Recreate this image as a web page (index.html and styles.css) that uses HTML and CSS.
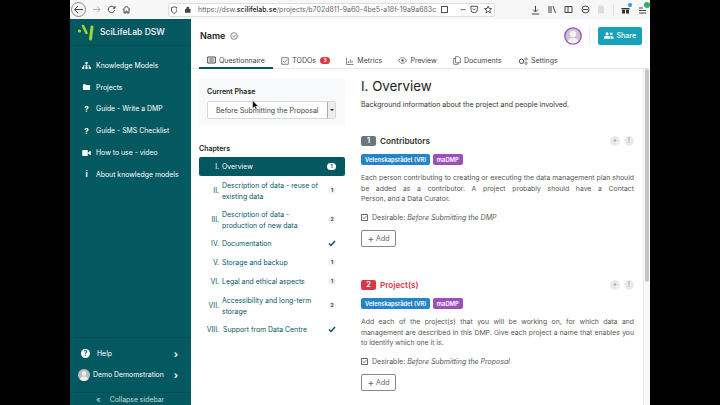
FILE: index.html
```html
<!DOCTYPE html>
<html lang="en">
<head>
    <meta charset="UTF-8">
    <title>Questionnaire - SciLifeLab DSW</title>
    <link rel="stylesheet" href="styles.css">
</head>
<body>
    <div class="screen">
        <!-- Browser toolbar -->
        <div class="browser">
            <span class="nav-back"><svg width="11" height="11" viewBox="0 0 11 11"><path d="M10 5.500H1.500M5 2 1.500 5.500 5 9" class="ico"/></svg></span>
            <svg class="faded" width="9" height="9" viewBox="0 0 9 9"><path d="M8 4.500H1M5 1.500l3 3-3 3" class="ico"/></svg>
            <svg width="9" height="9" viewBox="0 0 9 9"><path d="M7.600 5.200A3.200 3.200 0 1 1 6.600 2L8 3.200M8 1v2.200H5.800" class="ico"/></svg>
            <svg width="9" height="9" viewBox="0 0 9 9"><path d="M1 4.500 4.500 1 8 4.500M2 4v4h2V6h1v2h2V4" class="ico"/></svg>
            <div class="urlbar">
                <svg width="7" height="8" viewBox="0 0 7 8"><path d="M3.500.5 6.500 1.500V4C6.500 6 5 7 3.500 7.600 2 7 .5 6 .5 4V1.500z" class="ico"/></svg>
                <svg class="lock" width="6" height="7" viewBox="0 0 6 7"><path d="M1.500 3V2a1.500 1.500 0 0 1 3 0v1H6v4H0V3z" fill="#444"/></svg>
                <span class="url">https://dsw.<b>scilifelab.se</b>/projects/b702d811-9a60-4be5-a18f-19a9a683c</span>
                <span class="reader"></span>
                <span class="dots">•••</span>
                <svg class="pocket" width="9" height="9" viewBox="0 0 9 9"><path d="M1 1h7v3.500a3.500 3.500 0 0 1-7 0zM3 3.500l1.500 1.500L6 3.500" class="ico"/></svg>
                <svg class="star" width="9" height="9" viewBox="0 0 9 9"><path d="M4.500.8 5.600 3.300 8.300 3.600 6.300 5.400 6.900 8.100 4.500 6.700 2.100 8.100 2.700 5.400.7 3.600 3.400 3.300z" class="ico"/></svg>
            </div>
            <div class="tools">
                <svg width="9" height="10" viewBox="0 0 9 10"><path d="M4.500 1v5.500M2 4.500l2.500 2.500L7 4.500M.8 9h7.400" class="ico"/></svg>
                <svg width="9" height="9" viewBox="0 0 9 9"><path d="M1 1v7M3 1v7M5 1l2.500 7" class="ico"/></svg>
                <svg width="9" height="9" viewBox="0 0 9 9"><path d="M1 1.500h7v6H1zM4 1.500v6" class="ico"/></svg>
                <svg width="9" height="9" viewBox="0 0 9 9"><circle cx="4.500" cy="4.500" r="3.500" class="ico"/><path d="M2 4.500h5" class="ico"/></svg>
                <svg width="8" height="9" viewBox="0 0 8 9"><path d="M1 .5h4.500L7 2v6.500H1z" fill="#ddd"/></svg>
                <span class="tool-sep"></span>
                <span class="menu-btn">
                    <svg width="9" height="9" viewBox="0 0 9 9"><path d="M.5 3h8v1.500H.5zM1 5h3v3.500H1zM5 5h3v3.500H5z" fill="#333"/></svg>
                    <span class="gift-dot"></span>
                </span>
                <span class="menu-btn">
                    <svg width="9" height="9" viewBox="0 0 9 9"><path d="M1 3h4M1 5.500h7M1 8h7" class="ico"/></svg>
                    <span class="update-dot"></span>
                </span>
            </div>
        </div>

        <div class="app">
            <!-- Sidebar -->
            <aside class="sidebar">
                <div class="brand">
                    <svg width="16" height="17" viewBox="0 0 16 17">
                        <circle cx="1.500" cy="7" r="1.600" fill="#a7d130"/>
                        <path d="M5 2 8.500 9" stroke="#a7d130" stroke-width="2.600" stroke-linecap="round"/>
                        <path d="M14 3 12.500 15" stroke="#a7d130" stroke-width="3" stroke-linecap="round"/>
                    </svg>
                    <span>SciLifeLab DSW</span>
                </div>
                <ul class="menu">
                    <li><svg class="menu-icon" width="9" height="7" viewBox="0 0 10 8"><path d="M3.800 0h2.400v2.400H3.800zM0 5.600h2.400V8H0zM3.800 5.600h2.400V8H3.800zM7.600 5.600H10V8H7.600zM4.600 2.400h.8V4H8.800v1.600H8V4.800H5.400v.8h-.8v-.8H2v.8h-.8V4h3.400z" fill="#fff"/></svg>Knowledge Models</li>
                    <li><svg class="menu-icon" width="8" height="6" viewBox="0 0 9 7.500"><path d="M0 1a.8.8 0 0 1 .8-.8h2.400l1 1h4a.8.8 0 0 1 .8.8v4.700a.8.8 0 0 1-.8.8H.8A.8.8 0 0 1 0 6.700z" fill="#fff"/></svg>Projects</li>
                    <li><span class="menu-icon glyph">?</span>Guide - Write a DMP</li>
                    <li><span class="menu-icon glyph">?</span>Guide - SMS Checklist</li>
                    <li><svg class="menu-icon" width="9" height="6" viewBox="0 0 10 7"><path d="M0 1a1 1 0 0 1 1-1h4.500a1 1 0 0 1 1 1v5a1 1 0 0 1-1 1H1a1 1 0 0 1-1-1zM7 2.500 10 .8v5.400L7 4.500z" fill="#fff"/></svg>How to use - video</li>
                    <li><span class="menu-icon glyph">i</span>About knowledge models</li>
                </ul>
                <div class="side-bottom">
                    <div class="side-row">
                        <span class="help-dot">?</span><span class="side-label">Help</span><span class="chev">›</span>
                    </div>
                    <div class="side-row user-row">
                        <svg class="user-pic" width="12" height="12" viewBox="0 0 12 12"><circle cx="6" cy="6" r="6" fill="#bdbdbd"/><circle cx="6" cy="4.600" r="2.300" fill="#eee"/><path d="M2 10.500C2.500 8 4 7.500 6 7.500s3.500.5 4 3A6 6 0 0 1 2 10.500z" fill="#eee"/></svg>
                        <span class="side-label">Demo Demomstration</span><span class="chev">›</span>
                    </div>
                </div>
                <div class="collapse"><span class="collapse-chev">«</span>Collapse sidebar</div>
            </aside>

            <main class="main">
                <div class="topbar">
                    <span class="name">Name</span>
                    <svg class="saved" width="8" height="8" viewBox="0 0 8 8"><circle cx="4" cy="4" r="3.300" class="ico thin"/><path d="M2.500 4 3.600 5 5.500 3" class="ico thin"/></svg>
                    <svg class="avatar" width="18" height="18" viewBox="0 0 18 18"><circle cx="9" cy="9" r="8.200" fill="#c9c9c9" stroke="#a043c8" stroke-width="1.300"/><circle cx="9" cy="7" r="3.200" fill="#f2f2f2"/><path d="M3.800 14.500C4.500 11.500 6.500 11 9 11s4.500.5 5.200 3.500A7.500 7.500 0 0 1 3.800 14.500z" fill="#f2f2f2"/></svg>
                    <span class="top-sep"></span>
                    <button class="share"><svg width="10" height="7" viewBox="0 0 10 7"><circle cx="3.200" cy="1.700" r="1.600" fill="#fff"/><circle cx="7.500" cy="1.700" r="1.400" fill="#fff"/><path d="M0 7V5.500A2 2 0 0 1 2 3.800h2.400a2 2 0 0 1 2 1.700V7zM7 7V5.500C7 4.800 6.800 4.300 6.500 3.900H8a2 2 0 0 1 2 1.600V7z" fill="#fff"/></svg>Share</button>
                </div>

                <nav class="tabs">
                    <span class="tab active"><svg width="9" height="8" viewBox="0 0 9 8"><path d="M.7 1h7.600v6H.7zM2.300 3h4.400M2.300 5h4.400" class="ico"/></svg>Questionnaire</span>
                    <span class="tab"><svg width="8" height="8" viewBox="0 0 8 8"><path d="M.7.700h6.600v6.600H.7zM2 4l1.500 1.500L6 2.500" class="ico thin"/></svg>TODOs<span class="count">3</span></span>
                    <span class="tab"><svg width="8" height="8" viewBox="0 0 8 8"><path d="M.5.500v7h7M2.500 6V4M4.300 6V2.500M6 6V3.500" class="ico thin"/></svg>Metrics</span>
                    <span class="tab"><svg width="9" height="7" viewBox="0 0 9 7"><path d="M.5 3.500C2 1 3 .7 4.500.7S7 1 8.500 3.500C7 6 6 6.300 4.500 6.300S2 6 .5 3.500z" class="ico thin"/><circle cx="4.500" cy="3.500" r="1.200" fill="#555"/></svg>Preview</span>
                    <span class="tab"><svg width="8" height="9" viewBox="0 0 8 9"><path d="M2.500.7h3l2 2v4h-5zM2.500 2.500H.7v5.800h4.500V6.700" class="ico thin"/></svg>Documents</span>
                    <span class="tab"><svg width="10" height="8" viewBox="0 0 10 8"><circle cx="3.500" cy="4.300" r="2.200" class="ico"/><circle cx="8" cy="2" r="1.200" class="ico thin"/><circle cx="8" cy="6.200" r="1.200" class="ico thin"/></svg>Settings</span>
                </nav>

                <div class="body">
                    <!-- Left column -->
                    <section class="chapters-col">
                        <div class="phase">
                            <div class="phase-label">Current Phase</div>
                            <div class="phase-select">
                                <span class="phase-value">Before Submitting the Proposal</span>
                                <span class="phase-arrow"></span>
                            </div>
                        </div>
                        <div class="chapters-title">Chapters</div>
                        <ul class="chapters">
                            <li class="chapter current"><span class="num">I.</span><span class="ctitle">Overview</span><span class="pill">1</span></li>
                            <li class="chapter tall"><span class="num">II.</span><span class="ctitle">Description of data - reuse of existing data</span><span class="pill">1</span></li>
                            <li class="chapter tall"><span class="num">III.</span><span class="ctitle">Description of data - production of new data</span><span class="pill">2</span></li>
                            <li class="chapter"><span class="num">IV.</span><span class="ctitle">Documentation</span><svg class="done" width="8" height="7" viewBox="0 0 8 7"><path d="M1 3.500 3 5.500 7 1" stroke="#04585f" stroke-width="1.500" fill="none"/></svg></li>
                            <li class="chapter"><span class="num">V.</span><span class="ctitle">Storage and backup</span><span class="pill">1</span></li>
                            <li class="chapter"><span class="num">VI.</span><span class="ctitle">Legal and ethical aspects</span><span class="pill">1</span></li>
                            <li class="chapter tall"><span class="num">VII.</span><span class="ctitle">Accessibility and long-term storage</span><span class="pill">2</span></li>
                            <li class="chapter"><span class="num">VIII.</span><span class="ctitle wide">Support from Data Centre</span><svg class="done" width="8" height="7" viewBox="0 0 8 7"><path d="M1 3.500 3 5.500 7 1" stroke="#04585f" stroke-width="1.500" fill="none"/></svg></li>
                        </ul>
                    </section>

                    <!-- Question content -->
                    <section class="content">
                        <h1>I. Overview</h1>
                        <p class="lead">Background information about the project and people involved.</p>

                        <article class="question first">
                            <div class="q-head">
                                <span class="q-num grey">1</span>
                                <span class="q-title">Contributors</span>
                                <span class="q-action">+</span>
                                <span class="q-action">!</span>
                            </div>
                            <div class="tags"><span class="tag blue">Vetenskapsrådet (VR)</span><span class="tag purple">maDMP</span></div>
                            <p class="q-text">Each person contributing to creating or executing the data management plan should be added as a contributor. A project probably should have a Contact <span class="keep">Person, and a Data Curator.</span></p>
                            <div class="desirable"><svg width="7" height="7" viewBox="0 0 7 7"><path d="M.5.500h6v6h-6zM1.800 3.500 3 4.700 5.300 2.200" class="ico thin dark"/></svg><span>Desirable: <em>Before Submitting the DMP</em></span></div>
                            <button class="add"><span class="plus">+</span>Add</button>
                        </article>

                        <article class="question">
                            <div class="q-head">
                                <span class="q-num red">2</span>
                                <span class="q-title red-text">Project(s)</span>
                                <span class="q-action">+</span>
                                <span class="q-action">!</span>
                            </div>
                            <div class="tags"><span class="tag blue">Vetenskapsrådet (VR)</span><span class="tag purple">maDMP</span></div>
                            <p class="q-text">Add each of the project(s) that you will be working on, for which data and management are described in this DMP. Give each project a name that enables you to identify which one it is.</p>
                            <div class="desirable"><svg width="7" height="7" viewBox="0 0 7 7"><path d="M.5.500h6v6h-6zM1.800 3.500 3 4.700 5.300 2.200" class="ico thin dark"/></svg><span>Desirable: <em>Before Submitting the Proposal</em></span></div>
                            <button class="add"><span class="plus">+</span>Add</button>
                        </article>
                    </section>

                    <div class="scroll-track"><div class="scroll-thumb"></div></div>
                </div>
            </main>
        </div>

        <!-- Mouse pointer -->
        <svg class="cursor" width="7" height="10" viewBox="0 0 7 10"><path d="M.5.500v8l2-1.800 1.300 2.800 1.200-.6L3.800 6.200H6.500z" fill="#111" stroke="#fff" stroke-width=".5"/></svg>
    </div>
</body>
</html>
```

FILE: styles.css
```css
* {
    box-sizing: border-box;
}

html,
body {
    margin: 0;
    height: 100%;
    background: #000;
    overflow: hidden;
}

body {
    font-family: Inter, "Liberation Sans", Arial, sans-serif;
    font-size: 7px;
    color: #333;
}

ul {
    list-style: none;
    margin: 0;
    padding: 0;
}

.ico {
    fill: none;
    stroke: #444;
    stroke-width: 1;
}

.thin {
    stroke: #666;
    stroke-width: .8;
}

.dark {
    stroke: #444;
}

.screen {
    position: relative;
    width: 580px;
    height: 405px;
    margin-left: 70px;
    background: #fff;
    display: flex;
    flex-direction: column;
}

/* browser */
.browser {
    height: 19px;
    flex: none;
    background: #f7f7f8;
    display: flex;
    align-items: center;
    padding-left: 1px;
    gap: 6px;
}

.nav-back {
    width: 15px;
    height: 15px;
    border: 1px solid #888;
    border-radius: 50%;
    display: flex;
    align-items: center;
    justify-content: center;
}

.faded {
    opacity: .4;
}

.urlbar {
    width: 327px;
    height: 14px;
    margin-left: 31px;
    background: #fff;
    border: 1px solid #ddd;
    border-radius: 2px;
    display: flex;
    align-items: center;
    padding: 0 2px;
    flex: none;
}

.lock {
    margin-left: 8px;
}

.url {
    flex: none;
    margin-left: 7px;
    font-size: 7px;
    color: #666;
    white-space: nowrap;
}

.url b {
    color: #222;
    font-weight: 500;
}

.reader {
    width: 7px;
    height: 7px;
    margin-left: 5px;
    border: 1px solid #555;
    flex: none;
}

.dots {
    margin-left: 12px;
    font-size: 4px;
    letter-spacing: -.5px;
    color: #444;
}

.pocket,
.star {
    margin-left: 5px;
}

.tools {
    display: flex;
    align-items: center;
    gap: 7.500px;
    margin-left: 30px;
}

.tool-sep {
    width: 1px;
    height: 12px;
    background: #ddd;
}

.menu-btn {
    position: relative;
    display: flex;
}

.gift-dot {
    position: absolute;
    top: -2px;
    right: -2px;
    width: 4px;
    height: 4px;
    border-radius: 50%;
    background: #2b9be0;
}

.update-dot {
    position: absolute;
    top: -3px;
    right: -3px;
    width: 6px;
    height: 6px;
    border-radius: 50%;
    background: #30b05a;
}

.app {
    flex: 1;
    display: flex;
    min-height: 0;
}

/* sidebar */
.sidebar {
    width: 121px;
    flex: none;
    background: #04585f;
    color: #fff;
    display: flex;
    flex-direction: column;
}

.brand {
    height: 27px;
    display: flex;
    align-items: center;
    gap: 6px;
    padding-left: 8px;
    font-size: 8.500px;
    font-weight: 500;
    border-bottom: 1px solid #034c52;
}

.menu {
    padding-top: 8.500px;
}

.menu li {
    height: 21.800px;
    display: flex;
    align-items: center;
    padding-left: 12px;
    font-size: 6.900px;
    white-space: nowrap;
}

.menu-icon {
    width: 9px;
    margin-right: 5px;
    flex: none;
}

.glyph {
    text-align: center;
    font-weight: 700;
    font-size: 8px;
}

.side-bottom {
    margin-top: auto;
    padding: 5px 0 7px;
    border-top: 1px solid #034c52;
    border-bottom: 1px solid #034c52;
}

.side-row {
    height: 21px;
    display: flex;
    align-items: center;
    padding: 0 13px 0 11px;
    font-size: 6.900px;
}

.user-row {
    padding-left: 8px;
}

.help-dot {
    width: 9px;
    height: 9px;
    border-radius: 50%;
    background: #fff;
    color: #04585f;
    font-size: 7px;
    font-weight: 700;
    line-height: 9px;
    text-align: center;
    margin-right: 7px;
}

.user-pic {
    margin-right: 3px;
}

.chev {
    margin-left: auto;
    font-size: 10px;
    font-weight: 700;
    line-height: 10px;
}

.collapse {
    height: 12px;
    flex: none;
    display: flex;
    align-items: center;
    padding-left: 26px;
    font-size: 6.900px;
    color: #c9dcdd;
}

.collapse-chev {
    margin-right: 9px;
    font-size: 8px;
}

/* main */
.main {
    flex: 1;
    min-width: 0;
    display: flex;
    flex-direction: column;
}

.topbar {
    height: 33px;
    flex: none;
    display: flex;
    align-items: center;
    padding: 0 8px 0 9px;
}

.name {
    font-size: 9px;
    font-weight: 600;
    color: #222;
}

.saved {
    margin-left: 5px;
}

.avatar {
    margin-left: auto;
}

.top-sep {
    width: 1px;
    height: 18px;
    margin: 0 8px 0 7px;
    background: #f0f0f0;
}

.share {
    width: 44px;
    height: 18px;
    border: none;
    border-radius: 2px;
    background: #17a2b8;
    color: #fff;
    font: 500 7px Inter, "Liberation Sans", sans-serif;
    display: flex;
    align-items: center;
    justify-content: center;
    gap: 3px;
}

.tabs {
    height: 17px;
    flex: none;
    display: flex;
    padding-left: 8px;
    border-bottom: 1px solid #e8e8e8;
    font-size: 7px;
    color: #444;
}

.tab {
    display: flex;
    align-items: center;
    gap: 3px;
    padding: 0 8.300px 0 8px;
    height: 17px;
}

.tab.active {
    border-bottom: 2px solid #04585f;
    padding-top: 1px;
}

.count {
    width: 10px;
    height: 7px;
    margin-left: 1px;
    border-radius: 4px;
    background: #dc3545;
    color: #fff;
    font-size: 5px;
    font-weight: 700;
    line-height: 7px;
    text-align: center;
}

.body {
    flex: 1;
    min-height: 0;
    display: flex;
    overflow: hidden;
}

/* chapters */
.chapters-col {
    width: 164px;
    flex: none;
    padding: 9px 10px 0 8px;
}

.phase {
    height: 48px;
    background: #f8f9fa;
    padding: 9px 9px 0 8px;
}

.phase-label {
    font-size: 7px;
    font-weight: 600;
    color: #222;
    margin-bottom: 5px;
}

.phase-select {
    height: 18px;
    background: #fff;
    border: 1px solid #d8d8d8;
    border-radius: 2px;
    display: flex;
    align-items: center;
    padding-left: 8px;
    color: #444;
    justify-content: space-between;
}

.phase-arrow {
    width: 8px;
    height: 16px;
    background: #ececec;
    border-left: 1px solid #aaa;
    position: relative;
}

.phase-arrow::after {
    content: "";
    position: absolute;
    left: 1.500px;
    top: 7px;
    border-left: 2px solid transparent;
    border-right: 2px solid transparent;
    border-top: 2px solid #222;
}

.chapters-title {
    margin-top: 18px;
    font-size: 7px;
    font-weight: 600;
    color: #222;
    margin-bottom: 4px;
}

.chapter {
    height: 19px;
    display: flex;
    align-items: center;
    color: #04585f;
    padding-right: 9px;
    line-height: 11px;
    font-size: 6.900px;
}

.chapter.tall {
    height: 29px;
}

.chapter.current {
    background: #04585f;
    color: #fff;
    border-radius: 2px;
}

.num {
    width: 20px;
    flex: none;
    text-align: right;
    margin-right: 3px;
}

.ctitle {
    width: 100px;
}

.ctitle.wide {
    margin-left: 1px;
    white-space: nowrap;
}

.pill {
    width: 8px;
    height: 7px;
    margin-left: auto;
    border-radius: 4px;
    background: #f2f2f2;
    color: #333;
    font-size: 5px;
    font-weight: 700;
    line-height: 7px;
    text-align: center;
}

.current .pill {
    width: 9px;
    background: #fff;
    color: #04585f;
}

.done {
    margin-left: auto;
}

/* questions */
.content {
    width: 288px;
    flex: none;
    padding: 9px 9px 0 6px;
}

h1 {
    margin: 0;
    font-size: 13.300px;
    line-height: 17px;
    font-weight: 400;
    color: #222;
}

.lead {
    margin: 5px 0 0;
    line-height: 9px;
    color: #333;
}

.question {
    margin-top: 32.500px;
}

.question.first {
    margin-top: 26px;
}

.q-head {
    display: flex;
    align-items: center;
    height: 12px;
}

.q-num {
    width: 15px;
    height: 10px;
    border-radius: 2px;
    color: #fff;
    font-size: 7.500px;
    font-weight: 600;
    line-height: 10px;
    text-align: center;
    margin-right: 4px;
}

.grey {
    background: #6c757d;
}

.red {
    background: #dc3545;
}

.q-title {
    font-size: 8.200px;
    font-weight: 600;
    color: #333;
    margin-right: auto;
}

.red-text {
    color: #dc3545;
}

.q-action {
    width: 10px;
    height: 10px;
    margin-left: 4px;
    border-radius: 50%;
    background: #e9ecef;
    color: #aaa;
    font-size: 7px;
    font-weight: 700;
    line-height: 10px;
    text-align: center;
}

.tags {
    display: flex;
    gap: 2.500px;
    margin-top: 7px;
}

.tag {
    height: 11px;
    padding: 0 4px;
    border-radius: 2px;
    color: #fff;
    font-size: 5.800px;
    font-weight: 600;
    line-height: 11px;
}

.blue {
    background: #2484c6;
}

.purple {
    background: #9b4fb8;
}

.q-text {
    margin: 8px 0 0;
    font-size: 6.850px;
    line-height: 10.500px;
    text-align: justify;
    color: #555;
}

.keep {
    white-space: nowrap;
}

.desirable {
    margin-top: 8px;
    display: flex;
    align-items: center;
    gap: 4px;
    color: #555;
    white-space: pre;
}

.add {
    display: flex;
    align-items: center;
    justify-content: center;
    gap: 2px;
    width: 35px;
    height: 17px;
    margin-top: 8px;
    background: #fff;
    border: 1px solid #888;
    border-radius: 2px;
    color: #666;
    font: 7px Inter, "Liberation Sans", sans-serif;
}

.plus {
    font-size: 10px;
    line-height: 10px;
}

.scroll-track {
    width: 7px;
    flex: none;
    margin-left: auto;
    background: #fafafa;
    border-left: 1px solid #eee;
    padding: 0 1px;
}

.scroll-thumb {
    height: 213px;
    border-radius: 3px;
    background: #c4c4c4;
}

.cursor {
    position: absolute;
    left: 182px;
    top: 100px;
}
```
